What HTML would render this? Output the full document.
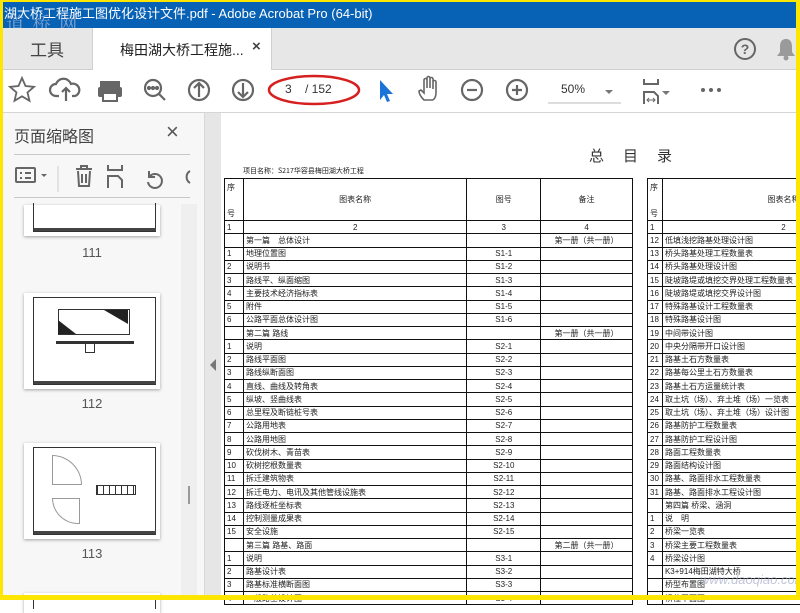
<!DOCTYPE html>
<html><head><meta charset="utf-8">
<style>
*{margin:0;padding:0;box-sizing:border-box}
body{width:800px;height:600px;overflow:hidden;position:relative;background:#fff;font-family:"Liberation Sans","Noto Sans CJK SC",sans-serif}
.abs{position:absolute}
#title{left:0;top:0;width:800px;height:28px;background:#0761b5;color:#fff;font-size:13px;line-height:28px;padding-left:4px;white-space:nowrap;font-family:"Liberation Sans","Noto Sans CJK SC",sans-serif}
#tabs{left:0;top:28px;width:800px;height:42px;background:#e7e7e7;border-bottom:1px solid #cfcfcf}
#tool{left:0;top:70px;width:800px;height:43px;background:#fff;border-bottom:1px solid #d5d5d5}
#left{left:0;top:113px;width:204px;height:487px;background:#f7f7f7}
#strip{left:204px;top:113px;width:17px;height:487px;background:#e6e6e6;border-left:1px solid #d8d8d8}
#page{left:221px;top:113px;width:579px;height:487px;background:#fff}
table{border-collapse:collapse;position:absolute;font-size:8px;color:#222;font-family:"Liberation Sans","Noto Sans CJK SC",sans-serif}
td{border:1px solid #111;height:13.25px;padding:0 2px;white-space:nowrap;overflow:hidden;line-height:11px}
td.c{text-align:center}
.thumb{position:absolute;left:24px;width:136px;background:#fff;box-shadow:0 1px 3px rgba(0,0,0,.35)}
.thumb .in{position:absolute;left:9px;top:4px;right:4px;bottom:4px;border:1px solid #333}
.lbl{position:absolute;width:184px;text-align:center;font-size:13px;color:#555;font-family:"Liberation Sans",sans-serif}
</style></head><body>
<div id="title" class="abs">湖大桥工程施工图优化设计文件.pdf - Adobe Acrobat Pro (64-bit)</div>
<div class="abs" style="left:6px;top:10px;color:rgba(180,190,220,.7);font-size:18px;font-family:'Noto Serif CJK SC',serif;letter-spacing:2px">道 桥 网</div>
<div id="tabs" class="abs">
  <div class="abs" style="left:30px;top:8px;font-size:17px;color:#444">工具</div>
  <div class="abs" style="left:92px;top:0;width:180px;height:42px;background:#fff;border-left:1px solid #d0d0d0;border-right:1px solid #d0d0d0"></div>
  <div class="abs" style="left:120px;top:12px;font-size:14px;color:#222">梅田湖大桥工程施...</div>
  <div class="abs" style="left:252px;top:10px;font-size:15px;color:#444;font-weight:bold">×</div>
  <svg class="abs" style="left:733px;top:9px" width="24" height="24"><circle cx="12" cy="12" r="10" fill="none" stroke="#666" stroke-width="2"/><text x="12" y="17" text-anchor="middle" font-size="14" font-weight="bold" fill="#666" font-family="Liberation Sans">?</text></svg>
  <svg class="abs" style="left:775px;top:8px" width="22" height="26"><path d="M11 3c-5 0-6 4-6 8v5l-3 4h18l-3-4v-5c0-4-1-8-6-8z" fill="#9a9a9a"/><circle cx="11" cy="22" r="2.5" fill="#9a9a9a"/></svg>
</div>
<div id="tool" class="abs">
 <svg class="abs" style="left:0;top:0" width="800" height="43" fill="none" stroke="#666" stroke-width="2.2">
  <path d="M22 8l3.5 8 8.5.8-6.5 5.6 2 8.4-7.5-4.5-7.5 4.5 2-8.4-6.5-5.6 8.5-.8z" stroke-width="1.8"/>
  <path d="M59 26h-3a6 6 0 0 1 0-12 8 8 0 0 1 15 0 6 6 0 0 1 4 12h-3M66 31V18m-4 4l4-4 4 4"/>
  <rect x="100" y="11" width="20" height="6" fill="#666" stroke="none"/><rect x="98" y="17" width="24" height="10" rx="2" fill="#666" stroke="none"/><rect x="103" y="23" width="14" height="8" fill="#fff" stroke="#666" stroke-width="2"/>
  <circle cx="153" cy="18" r="8"/><path d="M159 24l6 6"/><circle cx="149" cy="18" r="1" fill="#666"/><circle cx="153" cy="18" r="1" fill="#666"/><circle cx="157" cy="18" r="1" fill="#666"/>
  <circle cx="199" cy="20" r="10"/><path d="M199 27V13m-5 5l5-5 5 5"/>
  <circle cx="243" cy="20" r="10"/><path d="M243 13v14m-5-5l5 5 5-5"/>
  <path d="M380 10v20l4-5 3 7 3-1-3-7h6z" fill="#1a73d8" stroke="none"/>
  <path d="M424 30c-3-3-5-6-5-9l2-1 3 3V10a1.5 1.5 0 0 1 3 0v8V8a1.5 1.5 0 0 1 3 0v10V9a1.5 1.5 0 0 1 3 0v10v-7a1.5 1.5 0 0 1 3 0v11c0 4-2 7-4 7z" stroke-width="1.6"/>
  <circle cx="472" cy="20" r="10"/><path d="M467 20h10"/>
  <circle cx="517" cy="20" r="10"/><path d="M512 20h10M517 15v10"/>
  <path d="M548 33h73" stroke="#bbb" stroke-width="1"/>
  <path d="M605 20l4 4 4-4z" fill="#777" stroke="none"/>
  <path d="M644 9v5h14V9M644 34V22h10l4 4v8" stroke-width="2"/><path d="M647 30h8m-6-2l-2 2 2 2m4-4l2 2-2 2" stroke-width="1"/>
  <path d="M662 21l4 4 4-4z" fill="#777" stroke="none"/>
  <circle cx="703" cy="20" r="2" fill="#666" stroke="none"/><circle cx="711" cy="20" r="2" fill="#666" stroke="none"/><circle cx="719" cy="20" r="2" fill="#666" stroke="none"/>
  <ellipse cx="314" cy="20" rx="45" ry="14" stroke="#d62020" stroke-width="2.5"/>
 </svg>
 <div class="abs" style="left:285px;top:12px;font-size:12px;color:#333">3 &nbsp;&nbsp;&nbsp;/ 152</div>
 <div class="abs" style="left:561px;top:12px;font-size:12px;color:#333">50%</div>
</div>
<div id="left" class="abs">
 <div class="abs" style="left:14px;top:10px;font-size:16px;color:#444">页面缩略图</div>
 <div class="abs" style="left:166px;top:6px;font-size:22px;color:#555">×</div>
 <div class="abs" style="left:14px;top:41px;width:176px;height:1px;background:#c8c8c8"></div>
 <svg class="abs" style="left:10px;top:48px" width="190" height="32" fill="none" stroke="#666" stroke-width="2">
  <rect x="6" y="7" width="19" height="14" rx="1"/><path d="M10 12h2M15 12h6M10 17h2M15 17h6"/><path d="M31 13l3 3 3-3z" fill="#666" stroke="none"/>
  <path d="M48 5v26" stroke="#ccc" stroke-width="1"/>
  <path d="M66 8h16M71 8V5h6v3M68 10l1 15h10l1-15M72 13v9M76 13v9"/>
  <path d="M98 4v5h14V4M98 27V15h10l4 4v8"/>
  <path d="M140 15a7 7 0 1 1-2 6M139 10v6h6" />
  <path d="M180 10a7 7 0 0 0 0 12"/>
 </svg>
 <div class="abs" style="left:14px;top:84px;width:176px;height:1px;background:#c8c8c8"></div>
 <div class="abs" style="left:181px;top:91px;width:16px;height:396px;background:#efefef"></div>
 <div class="abs" style="left:188px;top:373px;width:2px;height:18px;background:#999"></div>
 <div class="thumb" style="top:92px;height:31px"><div class="in" style="top:-2px;border-top:none"></div><div class="abs" style="left:10px;right:4px;bottom:5px;height:3px;background:#444"></div></div>
 <div class="lbl" style="top:132px">111</div>
 <div class="thumb" style="top:180px;height:96px"><div class="in"></div>
  <div class="abs" style="left:34px;top:16px;width:72px;height:26px;border:1px solid #333"></div>
  <div class="abs" style="left:34px;top:27px;width:18px;height:14px;background:#222;clip-path:polygon(0 0,100% 100%,0 100%)"></div>
  <div class="abs" style="left:80px;top:17px;width:24px;height:14px;background:#222;clip-path:polygon(0 0,100% 0,100% 100%)"></div>
  <div class="abs" style="left:32px;top:48px;width:78px;height:3px;background:#333"></div>
  <div class="abs" style="left:61px;top:50px;width:10px;height:10px;border:1px solid #333"></div>
  <div class="abs" style="left:10px;right:4px;bottom:5px;height:3px;background:#444"></div></div>
 <div class="lbl" style="top:283px">112</div>
 <div class="thumb" style="top:330px;height:96px"><div class="in"></div>
  <div class="abs" style="left:28px;top:12px;width:30px;height:30px;border:1px solid #999;border-radius:0 30px 0 0"></div>
  <div class="abs" style="left:28px;top:55px;width:28px;height:26px;border:1px solid #999;border-radius:0 0 0 28px"></div>
  <div class="abs" style="left:72px;top:42px;width:40px;height:10px;border:1px solid #333;background:repeating-linear-gradient(90deg,#333 0 1px,#fff 1px 6px)"></div>
  <div class="abs" style="left:10px;right:4px;bottom:5px;height:3px;background:#444"></div></div>
 <div class="lbl" style="top:433px">113</div>
 <div class="thumb" style="top:480px;height:20px"><div class="in" style="border-bottom:none"></div></div>
</div>
<div id="strip" class="abs"><svg class="abs" style="left:3px;top:245px" width="10" height="14"><path d="M8 1L2 7l6 6z" fill="#777"/></svg></div>
<div id="page" class="abs">
 <div class="abs" style="left:368px;top:32px;font-size:15px;color:#333;letter-spacing:19px;font-family:'Noto Sans CJK SC',sans-serif">总目录</div>
 <div class="abs" style="left:22px;top:53px;font-size:7px;color:#222;font-family:'Noto Sans CJK SC',sans-serif">项目名称：S217华容县梅田湖大桥工程</div>
</div>
<table style="left:224px;top:178px;width:409px">
<colgroup><col style="width:19px"><col style="width:224px"><col style="width:74px"><col style="width:92px"></colgroup>
<tr style="height:40px"><td style="vertical-align:top;line-height:13px;padding-top:2px">序<br><br>号</td><td class="c">图表名称</td><td class="c">图号</td><td class="c">备注</td></tr>
<tr><td>1</td><td class="c">2</td><td class="c">3</td><td class="c">4</td></tr>
<tr><td></td><td>第一篇　总体设计</td><td></td><td class="c">第一册（共一册）</td></tr>
<tr><td>1</td><td>地理位置图</td><td class="c">S1-1</td><td></td></tr>
<tr><td>2</td><td>说明书</td><td class="c">S1-2</td><td></td></tr>
<tr><td>3</td><td>路线平、纵面缩图</td><td class="c">S1-3</td><td></td></tr>
<tr><td>4</td><td>主要技术经济指标表</td><td class="c">S1-4</td><td></td></tr>
<tr><td>5</td><td>附件</td><td class="c">S1-5</td><td></td></tr>
<tr><td>6</td><td>公路平面总体设计图</td><td class="c">S1-6</td><td></td></tr>
<tr><td></td><td>第二篇 路线</td><td></td><td class="c">第一册（共一册）</td></tr>
<tr><td>1</td><td>说明</td><td class="c">S2-1</td><td></td></tr>
<tr><td>2</td><td>路线平面图</td><td class="c">S2-2</td><td></td></tr>
<tr><td>3</td><td>路线纵断面图</td><td class="c">S2-3</td><td></td></tr>
<tr><td>4</td><td>直线、曲线及转角表</td><td class="c">S2-4</td><td></td></tr>
<tr><td>5</td><td>纵坡、竖曲线表</td><td class="c">S2-5</td><td></td></tr>
<tr><td>6</td><td>总里程及断链桩号表</td><td class="c">S2-6</td><td></td></tr>
<tr><td>7</td><td>公路用地表</td><td class="c">S2-7</td><td></td></tr>
<tr><td>8</td><td>公路用地图</td><td class="c">S2-8</td><td></td></tr>
<tr><td>9</td><td>砍伐树木、青苗表</td><td class="c">S2-9</td><td></td></tr>
<tr><td>10</td><td>砍树挖根数量表</td><td class="c">S2-10</td><td></td></tr>
<tr><td>11</td><td>拆迁建筑物表</td><td class="c">S2-11</td><td></td></tr>
<tr><td>12</td><td>拆迁电力、电讯及其他管线设施表</td><td class="c">S2-12</td><td></td></tr>
<tr><td>13</td><td>路线逐桩坐标表</td><td class="c">S2-13</td><td></td></tr>
<tr><td>14</td><td>控制测量成果表</td><td class="c">S2-14</td><td></td></tr>
<tr><td>15</td><td>安全设施</td><td class="c">S2-15</td><td></td></tr>
<tr><td></td><td>第三篇 路基、路面</td><td></td><td class="c">第二册（共一册）</td></tr>
<tr><td>1</td><td>说明</td><td class="c">S3-1</td><td></td></tr>
<tr><td>2</td><td>路基设计表</td><td class="c">S3-2</td><td></td></tr>
<tr><td>3</td><td>路基标准横断面图</td><td class="c">S3-3</td><td></td></tr>
<tr><td>4</td><td>一般路基设计图</td><td class="c">S3-4</td><td></td></tr>
</table>
<table style="left:647px;top:178px;width:200px">
<colgroup><col style="width:15px"><col style="width:185px"></colgroup>
<tr style="height:40px"><td style="vertical-align:top;line-height:13px;padding-top:2px">序<br><br>号</td><td class="c" style="padding-left:60px">图表名称</td></tr>
<tr><td>1</td><td class="c" style="padding-left:60px">2</td></tr>
<tr><td>12</td><td>低填浅挖路基处理设计图</td></tr>
<tr><td>13</td><td>桥头路基处理工程数量表</td></tr>
<tr><td>14</td><td>桥头路基处理设计图</td></tr>
<tr><td>15</td><td>陡坡路堤或填挖交界处理工程数量表</td></tr>
<tr><td>16</td><td>陡坡路堤或填挖交界设计图</td></tr>
<tr><td>17</td><td>特殊路基设计工程数量表</td></tr>
<tr><td>18</td><td>特殊路基设计图</td></tr>
<tr><td>19</td><td>中间带设计图</td></tr>
<tr><td>20</td><td>中央分隔带开口设计图</td></tr>
<tr><td>21</td><td>路基土石方数量表</td></tr>
<tr><td>22</td><td>路基每公里土石方数量表</td></tr>
<tr><td>23</td><td>路基土石方运量统计表</td></tr>
<tr><td>24</td><td>取土坑（场）、弃土堆（场）一览表</td></tr>
<tr><td>25</td><td>取土坑（场）、弃土堆（场）设计图</td></tr>
<tr><td>26</td><td>路基防护工程数量表</td></tr>
<tr><td>27</td><td>路基防护工程设计图</td></tr>
<tr><td>28</td><td>路面工程数量表</td></tr>
<tr><td>29</td><td>路面结构设计图</td></tr>
<tr><td>30</td><td>路基、路面排水工程数量表</td></tr>
<tr><td>31</td><td>路基、路面排水工程设计图</td></tr>
<tr><td></td><td>第四篇 桥梁、涵洞</td></tr>
<tr><td>1</td><td>说　明</td></tr>
<tr><td>2</td><td>桥梁一览表</td></tr>
<tr><td>3</td><td>桥梁主要工程数量表</td></tr>
<tr><td>4</td><td>桥梁设计图</td></tr>
<tr><td></td><td>K3+914梅田湖特大桥</td></tr>
<tr><td></td><td>桥型布置图</td></tr>
<tr><td></td><td>桥位平面图</td></tr>
</table>
<div class="abs" style="left:700px;top:572px;font-size:13px;color:rgba(150,160,190,.6);font-style:italic">www.daoqiao.com</div>
<div class="abs" style="left:0;top:0;width:800px;height:2px;background:#ffe600"></div>
<div class="abs" style="left:0;top:0;width:3px;height:600px;background:#ffe600"></div>
<div class="abs" style="left:796px;top:0;width:4px;height:600px;background:#ffe600"></div>
<div class="abs" style="left:0;top:595px;width:800px;height:5px;background:#ffe600"></div>
</body></html>
